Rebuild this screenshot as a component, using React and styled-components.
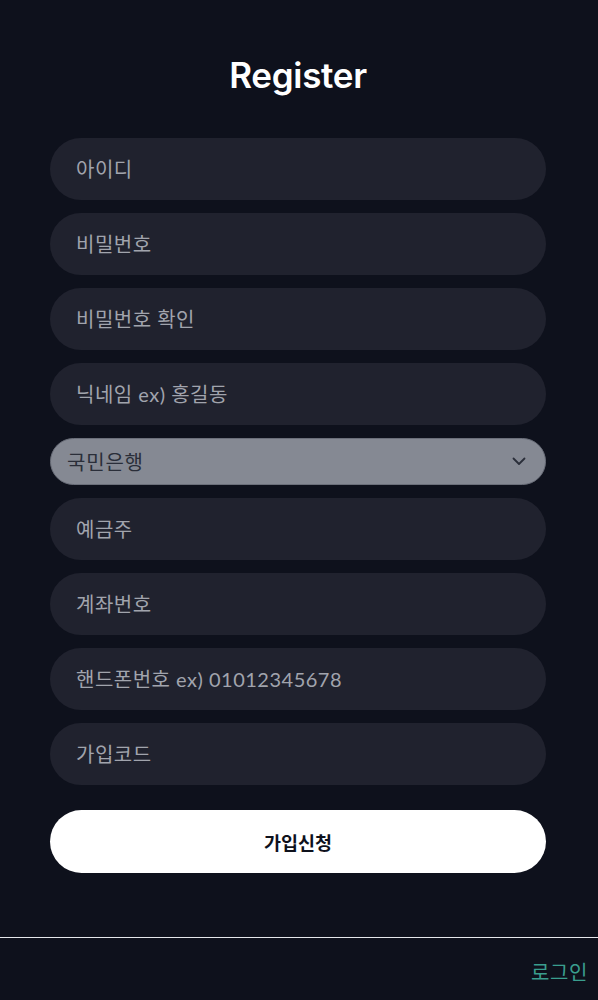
import React from "react";
import styled, { createGlobalStyle } from "styled-components";

const Global = createGlobalStyle`
  html, body { margin: 0; padding: 0; background: #0e111c; }
  body { font-family: Inter, "Noto Sans CJK KR", sans-serif; }
  * { box-sizing: border-box; }
`;

const Page = styled.div`
  min-height: 1000px;
  background: #0e111c;
  display: flex;
  flex-direction: column;
`;

const Main = styled.main`
  padding: 52px 52px 0 50px;
  display: flex;
  flex-direction: column;
`;

const Title = styled.h1`
  margin: 0 0 40px;
  text-align: center;
  color: #ffffff;
  font-family: Inter, sans-serif;
  font-weight: 600;
  font-size: 35px;
  line-height: 46px;
  letter-spacing: -0.3px;
`;

const Form = styled.form`
  display: flex;
  flex-direction: column;
  gap: 13px;
`;

const Field = styled.input`
  height: 62px;
  width: 100%;
  border: none;
  border-radius: 31px;
  background: #20222e;
  padding: 0 26px;
  font-family: Lato, "Noto Sans CJK KR", sans-serif;
  font-size: 20px;
  letter-spacing: 0.5px;
  color: #e5e7eb;
  outline: none;
  &::placeholder { color: #a1a4ad; }
`;

const SelectWrap = styled.div`
  position: relative;
  height: 47px;
`;

const Select = styled.select`
  appearance: none;
  width: 100%;
  height: 47px;
  border: 1px solid #6b6f7a;
  border-radius: 24px;
  background: #858993;
  padding: 0 16px;
  font-family: "Noto Sans CJK KR", sans-serif;
  font-size: 20px;
  letter-spacing: 0.8px;
  color: #2a2e39;
  outline: none;
`;

const Chevron = styled.svg`
  position: absolute;
  right: 19px;
  top: 16px;
  pointer-events: none;
`;

const Submit = styled.button`
  margin-top: 12px;
  height: 63px;
  border: none;
  border-radius: 32px;
  background: #ffffff;
  color: #0e111c;
  font-family: "Noto Sans CJK KR", sans-serif;
  font-weight: 700;
  font-size: 18.5px;
  cursor: pointer;
`;

const Footer = styled.footer`
  margin-top: 64px;
  border-top: 1px solid #e5e7eb;
  display: flex;
  justify-content: flex-end;
  padding: 20px 10px 0;
`;

const LoginLink = styled.a`
  color: #3a9e8e;
  font-family: "Noto Sans CJK KR", sans-serif;
  font-size: 20px;
  line-height: 28px;
  text-decoration: none;
  letter-spacing: 0.6px;
`;

const placeholders = ["아이디", "비밀번호", "비밀번호 확인", "닉네임 ex) 홍길동"];
const after = ["예금주", "계좌번호", "핸드폰번호 ex) 01012345678", "가입코드"];

export default function App() {
  return (
    <Page>
      <Global />
      <Main>
        <Title>Register</Title>
        <Form onSubmit={(e) => e.preventDefault()}>
          {placeholders.map((p) => (
            <Field key={p} placeholder={p} type={p.startsWith("비밀번호") ? "password" : "text"} />
          ))}
          <SelectWrap>
            <Select defaultValue="국민은행">
              <option>국민은행</option>
              <option>신한은행</option>
              <option>우리은행</option>
              <option>하나은행</option>
            </Select>
            <Chevron width="16" height="14" viewBox="0 0 16 14" fill="none">
              <path d="M2.5 4.5 L8 10 L13.5 4.5" stroke="#2a2e39" strokeWidth="1.8" strokeLinecap="round" strokeLinejoin="round" />
            </Chevron>
          </SelectWrap>
          {after.map((p) => (
            <Field key={p} placeholder={p} />
          ))}
          <Submit type="submit">가입신청</Submit>
        </Form>
      </Main>
      <Footer>
        <LoginLink href="#">로그인</LoginLink>
      </Footer>
    </Page>
  );
}
